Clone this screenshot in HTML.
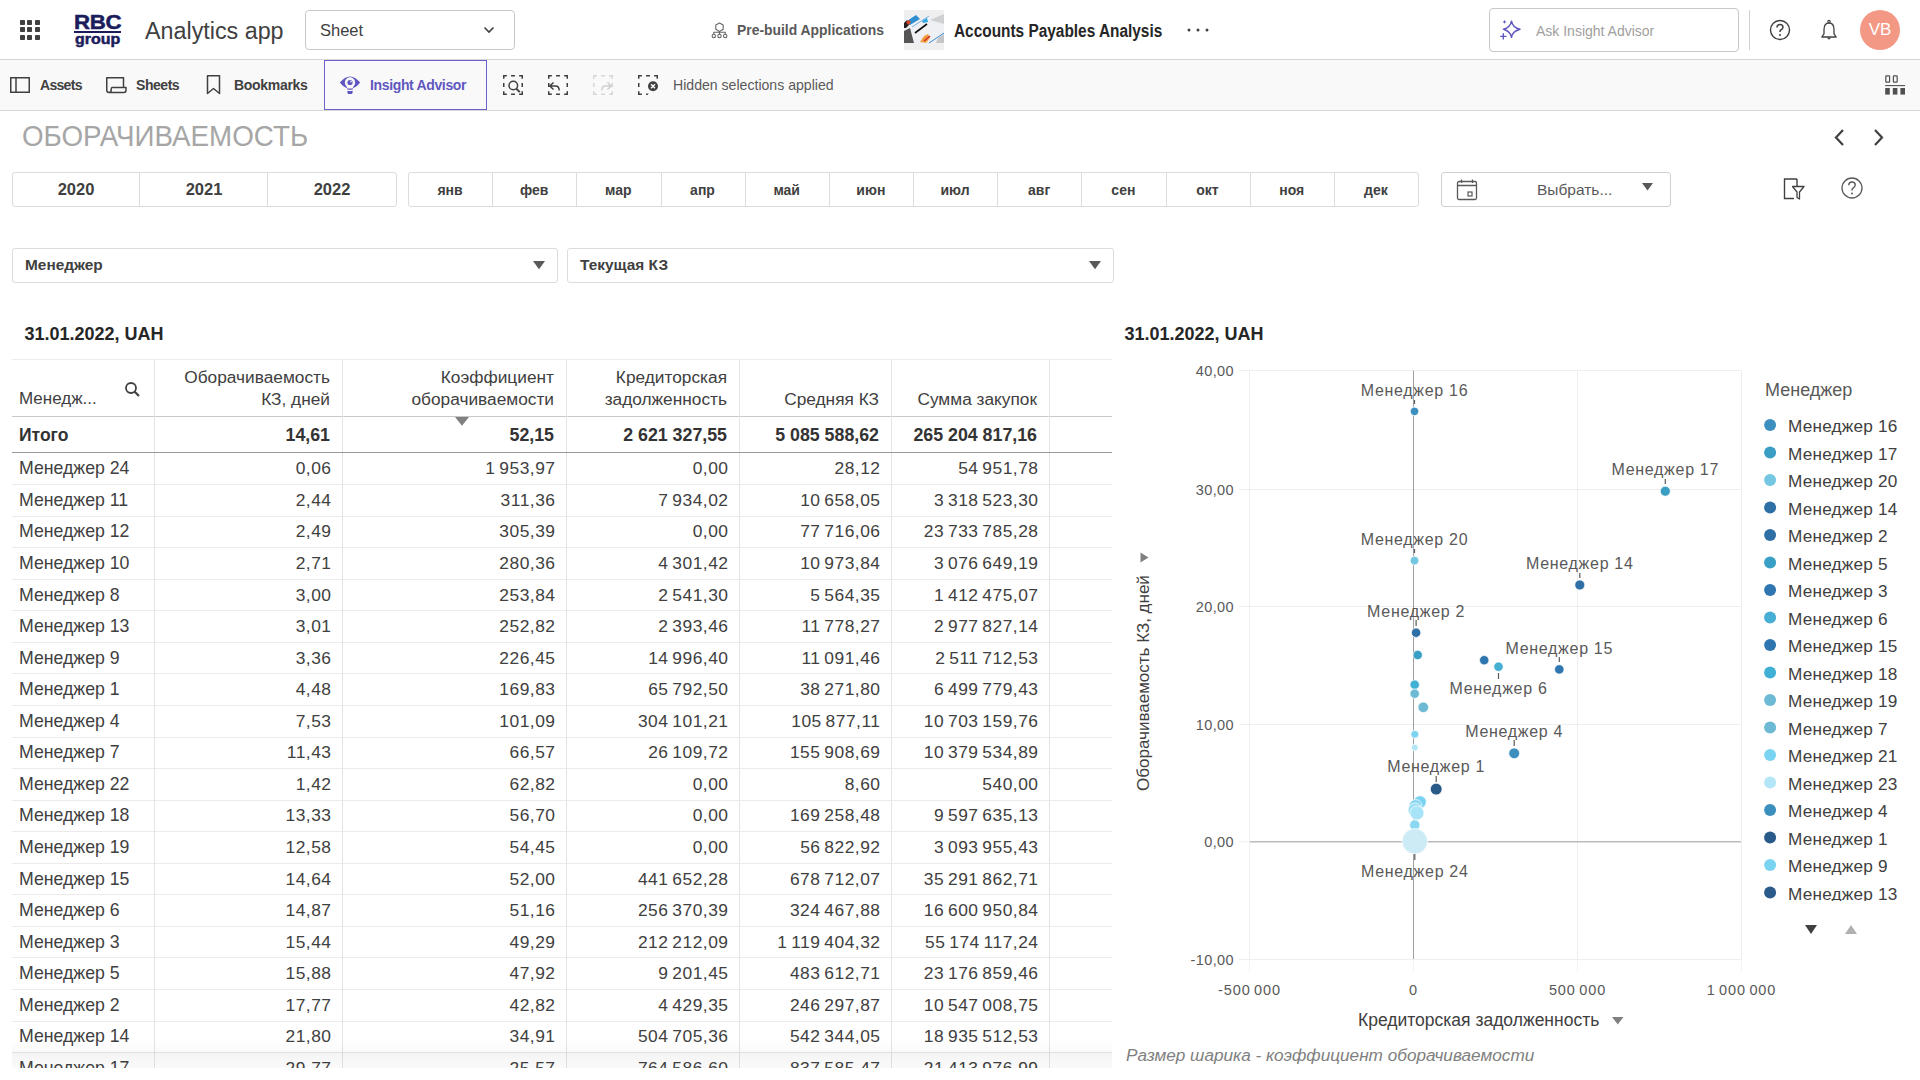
<!DOCTYPE html>
<html><head><meta charset="utf-8"><title>Accounts Payables Analysis</title>
<style>
*{box-sizing:border-box;margin:0;padding:0}
html,body{width:1920px;height:1080px;overflow:hidden;background:#fff}
body{font-family:'Liberation Sans', sans-serif;color:#404040;position:relative}
.a{position:absolute;white-space:nowrap}
svg{position:absolute;overflow:visible}
</style></head><body>

<div class="a" style="left:0;top:0;width:1920px;height:60px;background:#fff;border-bottom:1px solid #d6d6d6"></div>
<svg style="left:0;top:0" width="60" height="60"><rect x="20" y="20" width="5" height="5" rx="0.8" fill="#404040"/><rect x="20" y="27" width="5" height="5" rx="0.8" fill="#404040"/><rect x="20" y="35" width="5" height="5" rx="0.8" fill="#404040"/><rect x="27" y="20" width="5" height="5" rx="0.8" fill="#404040"/><rect x="27" y="27" width="5" height="5" rx="0.8" fill="#404040"/><rect x="27" y="35" width="5" height="5" rx="0.8" fill="#404040"/><rect x="35" y="20" width="5" height="5" rx="0.8" fill="#404040"/><rect x="35" y="27" width="5" height="5" rx="0.8" fill="#404040"/><rect x="35" y="35" width="5" height="5" rx="0.8" fill="#404040"/></svg>
<div class="a" style="left:73.8px;top:9.8px;font:bold 21px/24px 'Liberation Sans', sans-serif;color:#1c1c5c;letter-spacing:-0.3px;transform:scaleX(1.06);transform-origin:0 0;-webkit-text-stroke:0.5px #1c1c5c">RBC</div>
<div class="a" style="left:74px;top:31px;width:47px;height:2px;background:#1c1c5c"></div>
<div class="a" style="left:74.5px;top:29.2px;font:bold 14.5px/20px 'Liberation Sans', sans-serif;color:#1c1c5c;transform:scaleX(1.1);transform-origin:0 0;-webkit-text-stroke:0.5px #1c1c5c">group</div>
<div class="a" style="left:145px;top:16px;font:400 23.3px/30px 'Liberation Sans', sans-serif;color:#404040">Analytics app</div>
<div class="a" style="left:305px;top:10px;width:210px;height:40px;border:1px solid #c8c8c8;border-radius:4px"></div>
<div class="a" style="left:320px;top:19px;font:400 16.5px/22px 'Liberation Sans', sans-serif;color:#404040">Sheet</div>
<svg style="left:483px;top:26px" width="12" height="8"><path d="M1.5 1.5 L6 6 L10.5 1.5" stroke="#404040" stroke-width="1.6" fill="none"/></svg>
<svg style="left:700px;top:12px" width="40" height="36"><path d="M19.5 11 L23.2 13.1 V17.3 L19.5 19.4 L15.8 17.3 V13.1 Z" stroke="#666" stroke-width="1.1" fill="none" stroke-linejoin="round"/><path d="M19.5 19.4 V22.2 M13.8 22.4 V20.3 H25.2 V22.4" stroke="#666" stroke-width="1.1" fill="none"/><circle cx="13.8" cy="24" r="1.7" stroke="#666" stroke-width="1.1" fill="none"/><circle cx="19.5" cy="24" r="1.7" stroke="#666" stroke-width="1.1" fill="none"/><circle cx="25.2" cy="24" r="1.7" stroke="#666" stroke-width="1.1" fill="none"/></svg>
<div class="a" style="left:737px;top:20px;font:bold 13.9px/20px 'Liberation Sans', sans-serif;color:#595959">Pre-build Applications</div>
<svg style="left:904px;top:10px" width="40" height="40">
<rect x="0" y="0" width="40" height="40" fill="#efefef"/>
<rect x="0" y="6.5" width="40" height="26.5" fill="#eef0f4"/>
<path d="M0 21 L6 18 L10 33 L0 33Z" fill="#555"/>
<path d="M0 13 L3 10 L6 14 L2 18 L0 18Z" fill="#222"/>
<path d="M3 11 L12 5 L16 9 L6 15Z" fill="#2d8fd0"/>
<path d="M2 12 L5 10 L7 12 L4 15Z" fill="#e04020"/>
<path d="M11 23 L23 14" stroke="#111" stroke-width="1.6"/>
<path d="M18 11 L23 8 L24 12 L19 13Z" fill="#30a8e0"/>
<path d="M16 32 L20 26 L24 24 L26 28 L22 33Z" fill="#f0a040"/>
<path d="M20 31 L26 26" stroke="#d03030" stroke-width="1.6"/>
<path d="M8 17 L25 6" stroke="#5a9fd8" stroke-width="0.8"/>
<path d="M25 33 L40 23" stroke="#3a8ad0" stroke-width="1"/>
<path d="M26 10 L40 4 L40 14" fill="#bbb" opacity="0.6"/>
<path d="M34 28 L40 24 L40 33 L32 33Z" fill="#aaa" opacity="0.6"/>
</svg>
<div class="a" style="left:954px;top:19.8px;font:bold 17.5px/22px 'Liberation Sans', sans-serif;color:#262626;transform:scaleX(0.88);transform-origin:0 0">Accounts Payables Analysis</div>
<svg style="left:1186px;top:27px" width="24" height="6"><circle cx="3" cy="3" r="1.5" fill="#404040"/><circle cx="12" cy="3" r="1.5" fill="#404040"/><circle cx="21" cy="3" r="1.5" fill="#404040"/></svg>
<div class="a" style="left:1489px;top:8px;width:250px;height:44px;border:1px solid #c8c8c8;border-radius:4px"></div>
<svg style="left:1495px;top:14px" width="30" height="30"><path d="M16.5 7.2 Q17.5 13.5 25 15.3 Q17.5 17.2 16.5 23.3 Q15.3 17.2 8.5 15.3 Q15.3 13.5 16.5 7.2Z" stroke="#5f57c0" stroke-width="1.5" fill="none" stroke-linejoin="round"/><path d="M8.3 19.3 V25.5 M5.2 22.4 H11.5" stroke="#5f57c0" stroke-width="1.4"/><path d="M9.5 6 L10.2 7.3 L11.5 7.9 L10.2 8.5 L9.5 9.8 L8.8 8.5 L7.5 7.9 L8.8 7.3Z" fill="#5f57c0"/></svg>
<div class="a" style="left:1536px;top:21px;font:400 14px/20px 'Liberation Sans', sans-serif;color:#a0a0a0">Ask Insight Advisor</div>
<div class="a" style="left:1749px;top:10px;width:1px;height:40px;background:#d0d0d0"></div>
<svg style="left:1768px;top:18px" width="24" height="24"><circle cx="12" cy="12" r="9.5" stroke="#404040" stroke-width="1.4" fill="none"/><path d="M9 9.5 Q9 6.5 12 6.5 Q15 6.5 15 9.3 Q15 11 12.5 12.2 Q12 12.5 12 14" stroke="#404040" stroke-width="1.5" fill="none"/><circle cx="12" cy="17" r="1" fill="#404040"/></svg>
<svg style="left:1817px;top:18px" width="24" height="24"><circle cx="12" cy="3.6" r="1.2" stroke="#404040" stroke-width="1.1" fill="none"/><path d="M4.8 19 L7 15.8 V11.5 Q7 5 12 5 Q17 5 17 11.5 V15.8 L19.2 19 Z" stroke="#404040" stroke-width="1.3" fill="none" stroke-linejoin="round"/><path d="M10.6 19.5 Q12 22.3 13.4 19.5" stroke="#404040" stroke-width="1.2" fill="none"/></svg>
<div class="a" style="left:1860px;top:10px;width:40px;height:40px;border-radius:50%;background:#f49886;color:#fff;font:400 17px/40px 'Liberation Sans', sans-serif;text-align:center">VB</div>
<div class="a" style="left:0;top:60px;width:1920px;height:51px;background:#f9f9f9;border-bottom:1px solid #d6d6d6"></div>
<svg style="left:10px;top:77px" width="20" height="16"><rect x="0.75" y="0.75" width="18.5" height="14.5" stroke="#404040" stroke-width="1.5" fill="none"/><path d="M6 1 V15" stroke="#404040" stroke-width="1.5"/></svg>
<div class="a" style="left:40px;top:75px;font:bold 14px/20px 'Liberation Sans', sans-serif;color:#404040;letter-spacing:-0.7px">Assets</div>
<svg style="left:106px;top:77px" width="21" height="17"><path d="M3 15.5 Q0.75 15.5 0.75 13 V0.75 H17.5 V10 M3 15.5 H18 Q20 15.5 20 13 V10.5 H6 Q5.2 10.5 5.2 12.5 Q5.2 15.5 3 15.5" stroke="#404040" stroke-width="1.5" fill="none" stroke-linejoin="round"/></svg>
<div class="a" style="left:136px;top:75px;font:bold 14px/20px 'Liberation Sans', sans-serif;color:#404040;letter-spacing:-0.45px">Sheets</div>
<svg style="left:206px;top:75px" width="16" height="20"><path d="M1.5 0.75 H13.5 V18.5 L7.5 13.5 L1.5 18.5 Z" stroke="#404040" stroke-width="1.5" fill="none" stroke-linejoin="round"/></svg>
<div class="a" style="left:234px;top:75px;font:bold 14px/20px 'Liberation Sans', sans-serif;color:#404040;letter-spacing:-0.3px">Bookmarks</div>
<div class="a" style="left:324px;top:60px;width:163px;height:50px;border:1.5px solid #6a62c9;background:#f9f9f9"></div>
<svg style="left:330px;top:68px" width="40" height="34"><path d="M9.8 14.5 Q20 2.5 30.2 14.5 Q27 19 23 20.2 L22.5 21.8 H17.5 L17 20.2 Q13 19 9.8 14.5 Z" fill="#5f57c0"/><path d="M20 9.2 A5.3 5.3 0 0 1 23.6 18.2 L22.6 20.4 H17.4 L16.4 18.2 A5.3 5.3 0 0 1 20 9.2 Z" fill="#f9f9f9"/><circle cx="20" cy="14.5" r="2.6" fill="#5f57c0"/><circle cx="21" cy="13.6" r="0.8" fill="#f9f9f9"/><path d="M17.1 23.1 H22.9 L22.1 25.9 H17.9 Z" fill="#5f57c0"/></svg>
<div class="a" style="left:370px;top:75px;font:bold 14px/20px 'Liberation Sans', sans-serif;color:#5f57c0;letter-spacing:-0.35px">Insight Advisor</div>
<svg style="left:503px;top:75px" width="20" height="20"><path d="M0.75 0.75 H19.25 V19.25 H0.75 Z" stroke="#404040" stroke-width="1.5" fill="none" stroke-dasharray="6.2 4.2 3.9 4.2" stroke-dashoffset="3.1"/><circle cx="10.3" cy="10.5" r="4.3" stroke="#404040" stroke-width="1.5" fill="none"/><path d="M13.3 13.6 L16.8 17.1" stroke="#404040" stroke-width="2"/></svg>
<svg style="left:548px;top:75px" width="20" height="20"><path d="M0.75 0.75 H19.25 V19.25 H0.75 Z" stroke="#404040" stroke-width="1.5" fill="none" stroke-dasharray="6.2 4.2 3.9 4.2" stroke-dashoffset="3.1"/><path d="M5.5 7.5 L1.8 11 L5.5 14.5 M2.2 11 H7.5 Q11.2 11 11.2 15.5" stroke="#404040" stroke-width="1.5" fill="none"/></svg>
<svg style="left:593px;top:75px" width="20" height="20"><path d="M0.75 0.75 H19.25 V19.25 H0.75 Z" stroke="#d6d6d6" stroke-width="1.5" fill="none" stroke-dasharray="6.2 4.2 3.9 4.2" stroke-dashoffset="3.1"/><path d="M14.5 7.5 L18.2 11 L14.5 14.5 M17.8 11 H12.5 Q8.8 11 8.8 15.5" stroke="#cfcfcf" stroke-width="1.5" fill="none"/></svg>
<svg style="left:638px;top:75px" width="21" height="21"><path d="M0.75 0.75 H19.25 V19.25 H0.75 Z" stroke="#404040" stroke-width="1.5" fill="none" stroke-dasharray="6.2 4.2 3.9 4.2" stroke-dashoffset="3.1"/><path d="M15 11.2 L21 11.2 L21 21 L9 21Z" fill="#f9f9f9"/><circle cx="15" cy="11.2" r="6.6" fill="#f9f9f9"/><circle cx="15" cy="11.2" r="5" fill="#404040"/><path d="M13 9.2 L17 13.2 M17 9.2 L13 13.2" stroke="#fff" stroke-width="1.4"/></svg>
<div class="a" style="left:673px;top:75px;font:400 14.1px/20px 'Liberation Sans', sans-serif;color:#595959">Hidden selections applied</div>
<svg style="left:1884px;top:75px" width="22" height="22"><rect x="1.8" y="0.8" width="3.8" height="6.4" rx="0.6" stroke="#505050" stroke-width="1.2" fill="none"/><rect x="9.4" y="0.8" width="3.8" height="6.4" rx="0.6" stroke="#505050" stroke-width="1.2" fill="none"/><path d="M1.2 10.6 H21" stroke="#505050" stroke-width="1.1"/><rect x="1.2" y="13" width="4.6" height="6.6" fill="#505050"/><rect x="8.8" y="13" width="4.6" height="6.6" fill="#505050"/><rect x="16.4" y="13" width="4.6" height="6.6" fill="#505050"/></svg>
<div class="a" style="left:21.5px;top:117.6px;font:400 30px/36px 'Liberation Sans', sans-serif;color:#a6a6a6;transform:scaleX(0.925);transform-origin:0 0">ОБОРАЧИВАЕМОСТЬ</div>
<svg style="left:1830px;top:128px" width="60" height="20"><path d="M13 2 L6 9.5 L13 17" stroke="#404040" stroke-width="2.2" fill="none"/><path d="M45 2 L52 9.5 L45 17" stroke="#404040" stroke-width="2.2" fill="none"/></svg>
<div class="a" style="left:12px;top:172px;width:385px;height:35px;border:1px solid #dcdcdc;border-radius:3px"></div>
<div class="a" style="left:12px;top:179px;width:128px;text-align:center;font:bold 16.5px/20px 'Liberation Sans', sans-serif;color:#404040">2020</div>
<div class="a" style="left:139px;top:173px;width:1px;height:33px;background:#dcdcdc"></div>
<div class="a" style="left:140px;top:179px;width:128px;text-align:center;font:bold 16.5px/20px 'Liberation Sans', sans-serif;color:#404040">2021</div>
<div class="a" style="left:267px;top:173px;width:1px;height:33px;background:#dcdcdc"></div>
<div class="a" style="left:268px;top:179px;width:128px;text-align:center;font:bold 16.5px/20px 'Liberation Sans', sans-serif;color:#404040">2022</div>
<div class="a" style="left:408px;top:172px;width:1011px;height:35px;border:1px solid #dcdcdc;border-radius:3px"></div>
<div class="a" style="left:408.00px;top:180px;width:84px;text-align:center;font:bold 14px/20px 'Liberation Sans', sans-serif;color:#404040">янв</div>
<div class="a" style="left:492.17px;top:173px;width:1px;height:33px;background:#dcdcdc"></div>
<div class="a" style="left:492.17px;top:180px;width:84px;text-align:center;font:bold 14px/20px 'Liberation Sans', sans-serif;color:#404040">фев</div>
<div class="a" style="left:576.34px;top:173px;width:1px;height:33px;background:#dcdcdc"></div>
<div class="a" style="left:576.34px;top:180px;width:84px;text-align:center;font:bold 14px/20px 'Liberation Sans', sans-serif;color:#404040">мар</div>
<div class="a" style="left:660.51px;top:173px;width:1px;height:33px;background:#dcdcdc"></div>
<div class="a" style="left:660.51px;top:180px;width:84px;text-align:center;font:bold 14px/20px 'Liberation Sans', sans-serif;color:#404040">апр</div>
<div class="a" style="left:744.68px;top:173px;width:1px;height:33px;background:#dcdcdc"></div>
<div class="a" style="left:744.68px;top:180px;width:84px;text-align:center;font:bold 14px/20px 'Liberation Sans', sans-serif;color:#404040">май</div>
<div class="a" style="left:828.85px;top:173px;width:1px;height:33px;background:#dcdcdc"></div>
<div class="a" style="left:828.85px;top:180px;width:84px;text-align:center;font:bold 14px/20px 'Liberation Sans', sans-serif;color:#404040">июн</div>
<div class="a" style="left:913.02px;top:173px;width:1px;height:33px;background:#dcdcdc"></div>
<div class="a" style="left:913.02px;top:180px;width:84px;text-align:center;font:bold 14px/20px 'Liberation Sans', sans-serif;color:#404040">июл</div>
<div class="a" style="left:997.19px;top:173px;width:1px;height:33px;background:#dcdcdc"></div>
<div class="a" style="left:997.19px;top:180px;width:84px;text-align:center;font:bold 14px/20px 'Liberation Sans', sans-serif;color:#404040">авг</div>
<div class="a" style="left:1081.36px;top:173px;width:1px;height:33px;background:#dcdcdc"></div>
<div class="a" style="left:1081.36px;top:180px;width:84px;text-align:center;font:bold 14px/20px 'Liberation Sans', sans-serif;color:#404040">сен</div>
<div class="a" style="left:1165.53px;top:173px;width:1px;height:33px;background:#dcdcdc"></div>
<div class="a" style="left:1165.53px;top:180px;width:84px;text-align:center;font:bold 14px/20px 'Liberation Sans', sans-serif;color:#404040">окт</div>
<div class="a" style="left:1249.70px;top:173px;width:1px;height:33px;background:#dcdcdc"></div>
<div class="a" style="left:1249.70px;top:180px;width:84px;text-align:center;font:bold 14px/20px 'Liberation Sans', sans-serif;color:#404040">ноя</div>
<div class="a" style="left:1333.87px;top:173px;width:1px;height:33px;background:#dcdcdc"></div>
<div class="a" style="left:1333.87px;top:180px;width:84px;text-align:center;font:bold 14px/20px 'Liberation Sans', sans-serif;color:#404040">дек</div>
<div class="a" style="left:1441px;top:172px;width:230px;height:35px;border:1px solid #d0d0d0;border-radius:3px"></div>
<svg style="left:1456px;top:179px" width="22" height="22"><rect x="1.5" y="2.5" width="19" height="18" rx="1.5" stroke="#595959" stroke-width="1.3" fill="none"/><path d="M1.5 6.5 H20.5 M5.5 0.5 V4 M16.5 0.5 V4" stroke="#595959" stroke-width="1.3"/><rect x="12" y="13" width="4" height="4" stroke="#595959" stroke-width="1.2" fill="none"/></svg>
<div class="a" style="left:1537px;top:179px;font:400 15.5px/22px 'Liberation Sans', sans-serif;color:#595959">Выбрать...</div>
<svg style="left:1642px;top:183px" width="12" height="8"><path d="M0 0 H11 L5.5 7.5Z" fill="#595959"/></svg>
<svg style="left:1783px;top:178px" width="22" height="24"><path d="M14 1 H1.5 V20.5 H11" stroke="#404040" stroke-width="1.4" fill="none"/><path d="M9.5 8.5 H21 L16.5 14 V21 L14 19.5 V14 Z" stroke="#404040" stroke-width="1.3" fill="none" stroke-linejoin="round"/><path d="M14 1 V8" stroke="#404040" stroke-width="1.4"/></svg>
<svg style="left:1840px;top:176px" width="24" height="24"><circle cx="12" cy="12" r="10" stroke="#595959" stroke-width="1.3" fill="none"/><path d="M8.8 9.3 Q8.8 6 12 6 Q15.2 6 15.2 9 Q15.2 11 12.8 12.3 Q12 12.8 12 14.5" stroke="#595959" stroke-width="1.4" fill="none"/><circle cx="12" cy="17.5" r="1" fill="#595959"/></svg>
<div class="a" style="left:12px;top:248px;width:546px;height:35px;border:1px solid #dcdcdc;border-radius:3px"></div>
<div class="a" style="left:25px;top:255px;font:bold 15.4px/20px 'Liberation Sans', sans-serif;color:#404040">Менеджер</div>
<svg style="left:532.5px;top:261px" width="13" height="9"><path d="M0 0 H12 L6 8.2Z" fill="#595959"/></svg>
<div class="a" style="left:567px;top:248px;width:547px;height:35px;border:1px solid #dcdcdc;border-radius:3px"></div>
<div class="a" style="left:580px;top:255px;font:bold 15.4px/20px 'Liberation Sans', sans-serif;color:#404040">Текущая КЗ</div>
<svg style="left:1088.5px;top:261px" width="13" height="9"><path d="M0 0 H12 L6 8.2Z" fill="#595959"/></svg>
<div class="a" style="left:24.5px;top:323px;font:bold 18px/22px 'Liberation Sans', sans-serif;color:#262626">31.01.2022, UAH</div>
<div class="a" style="left:1124.5px;top:323px;font:bold 18px/22px 'Liberation Sans', sans-serif;color:#262626">31.01.2022, UAH</div>
<div class="a" style="left:12px;top:359px;width:1100px;height:1px;background:#ececec"></div>
<div class="a" style="left:12px;top:416px;width:1100px;height:1px;background:#c8c8c8"></div>
<div class="a" style="left:12px;top:484.15px;width:1100px;height:1px;background:#ebebeb"></div>
<div class="a" style="left:12px;top:515.70px;width:1100px;height:1px;background:#ebebeb"></div>
<div class="a" style="left:12px;top:547.25px;width:1100px;height:1px;background:#ebebeb"></div>
<div class="a" style="left:12px;top:578.80px;width:1100px;height:1px;background:#ebebeb"></div>
<div class="a" style="left:12px;top:610.35px;width:1100px;height:1px;background:#ebebeb"></div>
<div class="a" style="left:12px;top:641.90px;width:1100px;height:1px;background:#ebebeb"></div>
<div class="a" style="left:12px;top:673.45px;width:1100px;height:1px;background:#ebebeb"></div>
<div class="a" style="left:12px;top:705.00px;width:1100px;height:1px;background:#ebebeb"></div>
<div class="a" style="left:12px;top:736.55px;width:1100px;height:1px;background:#ebebeb"></div>
<div class="a" style="left:12px;top:768.10px;width:1100px;height:1px;background:#ebebeb"></div>
<div class="a" style="left:12px;top:799.65px;width:1100px;height:1px;background:#ebebeb"></div>
<div class="a" style="left:12px;top:831.20px;width:1100px;height:1px;background:#ebebeb"></div>
<div class="a" style="left:12px;top:862.75px;width:1100px;height:1px;background:#ebebeb"></div>
<div class="a" style="left:12px;top:894.30px;width:1100px;height:1px;background:#ebebeb"></div>
<div class="a" style="left:12px;top:925.85px;width:1100px;height:1px;background:#ebebeb"></div>
<div class="a" style="left:12px;top:957.40px;width:1100px;height:1px;background:#ebebeb"></div>
<div class="a" style="left:12px;top:988.95px;width:1100px;height:1px;background:#ebebeb"></div>
<div class="a" style="left:12px;top:1020.50px;width:1100px;height:1px;background:#ebebeb"></div>
<div class="a" style="left:12px;top:1052.05px;width:1100px;height:1px;background:#ebebeb"></div>
<div class="a" style="left:154px;top:360px;width:1px;height:708px;background:#e4e4e4"></div>
<div class="a" style="left:342px;top:360px;width:1px;height:708px;background:#e4e4e4"></div>
<div class="a" style="left:566px;top:360px;width:1px;height:708px;background:#e4e4e4"></div>
<div class="a" style="left:739px;top:360px;width:1px;height:708px;background:#e4e4e4"></div>
<div class="a" style="left:891px;top:360px;width:1px;height:708px;background:#e4e4e4"></div>
<div class="a" style="left:1049px;top:360px;width:1px;height:708px;background:#e4e4e4"></div>
<div class="a" style="left:12px;top:451.6px;width:1100px;height:1.4px;background:#999"></div>
<div class="a" style="left:19px;top:389px;font:400 17px/20px 'Liberation Sans', sans-serif;color:#404040">Менедж...</div>
<svg style="left:124px;top:381px" width="18" height="18"><circle cx="7" cy="7" r="5" stroke="#404040" stroke-width="1.8" fill="none"/><path d="M10.5 10.5 L15 15" stroke="#404040" stroke-width="2.2"/></svg>
<div class="a" style="right:1590px;top:366px;text-align:right;font:400 17.3px/22px 'Liberation Sans', sans-serif;color:#404040">Оборачиваемость<br>КЗ, дней</div>
<div class="a" style="right:1366px;top:366px;text-align:right;font:400 17.3px/22px 'Liberation Sans', sans-serif;color:#404040">Коэффициент<br>оборачиваемости</div>
<div class="a" style="right:1193px;top:366px;text-align:right;font:400 17.3px/22px 'Liberation Sans', sans-serif;color:#404040">Кредиторская<br>задолженность</div>
<div class="a" style="right:1041px;top:366px;text-align:right;font:400 17.3px/22px 'Liberation Sans', sans-serif;color:#404040">&nbsp;<br>Средняя КЗ</div>
<div class="a" style="right:883px;top:366px;text-align:right;font:400 17.3px/22px 'Liberation Sans', sans-serif;color:#404040">&nbsp;<br>Сумма закупок</div>
<svg style="left:455px;top:417px" width="15" height="10"><path d="M0 0 H14 L7 8.7Z" fill="#808080"/></svg>
<div class="a" style="left:19px;top:424px;font:bold 17.5px/22px 'Liberation Sans', sans-serif;color:#333">Итого</div>
<div class="a" style="right:1590px;top:424px;font:bold 17.8px/22px 'Liberation Sans', sans-serif;color:#333">14,61</div>
<div class="a" style="right:1366px;top:424px;font:bold 17.8px/22px 'Liberation Sans', sans-serif;color:#333">52,15</div>
<div class="a" style="right:1193px;top:424px;font:bold 17.8px/22px 'Liberation Sans', sans-serif;color:#333">2&nbsp;621&nbsp;327,55</div>
<div class="a" style="right:1041px;top:424px;font:bold 17.8px/22px 'Liberation Sans', sans-serif;color:#333">5&nbsp;085&nbsp;588,62</div>
<div class="a" style="right:883px;top:424px;font:bold 17.8px/22px 'Liberation Sans', sans-serif;color:#333">265&nbsp;204&nbsp;817,16</div>
<div class="a" style="left:19px;top:457.38px;font:400 17.7px/22px 'Liberation Sans', sans-serif;color:#404040">Менеджер 24</div>
<div class="a" style="right:1588.5px;top:457.38px;font:400 17.4px/22px 'Liberation Sans', sans-serif;color:#404040;letter-spacing:0.5px;word-spacing:-1.5px">0,06</div>
<div class="a" style="right:1364.5px;top:457.38px;font:400 17.4px/22px 'Liberation Sans', sans-serif;color:#404040;letter-spacing:0.5px;word-spacing:-1.5px">1&nbsp;953,97</div>
<div class="a" style="right:1191.5px;top:457.38px;font:400 17.4px/22px 'Liberation Sans', sans-serif;color:#404040;letter-spacing:0.5px;word-spacing:-1.5px">0,00</div>
<div class="a" style="right:1039.5px;top:457.38px;font:400 17.4px/22px 'Liberation Sans', sans-serif;color:#404040;letter-spacing:0.5px;word-spacing:-1.5px">28,12</div>
<div class="a" style="right:881.5px;top:457.38px;font:400 17.4px/22px 'Liberation Sans', sans-serif;color:#404040;letter-spacing:0.5px;word-spacing:-1.5px">54&nbsp;951,78</div>
<div class="a" style="left:19px;top:488.93px;font:400 17.7px/22px 'Liberation Sans', sans-serif;color:#404040">Менеджер 11</div>
<div class="a" style="right:1588.5px;top:488.93px;font:400 17.4px/22px 'Liberation Sans', sans-serif;color:#404040;letter-spacing:0.5px;word-spacing:-1.5px">2,44</div>
<div class="a" style="right:1364.5px;top:488.93px;font:400 17.4px/22px 'Liberation Sans', sans-serif;color:#404040;letter-spacing:0.5px;word-spacing:-1.5px">311,36</div>
<div class="a" style="right:1191.5px;top:488.93px;font:400 17.4px/22px 'Liberation Sans', sans-serif;color:#404040;letter-spacing:0.5px;word-spacing:-1.5px">7&nbsp;934,02</div>
<div class="a" style="right:1039.5px;top:488.93px;font:400 17.4px/22px 'Liberation Sans', sans-serif;color:#404040;letter-spacing:0.5px;word-spacing:-1.5px">10&nbsp;658,05</div>
<div class="a" style="right:881.5px;top:488.93px;font:400 17.4px/22px 'Liberation Sans', sans-serif;color:#404040;letter-spacing:0.5px;word-spacing:-1.5px">3&nbsp;318&nbsp;523,30</div>
<div class="a" style="left:19px;top:520.48px;font:400 17.7px/22px 'Liberation Sans', sans-serif;color:#404040">Менеджер 12</div>
<div class="a" style="right:1588.5px;top:520.48px;font:400 17.4px/22px 'Liberation Sans', sans-serif;color:#404040;letter-spacing:0.5px;word-spacing:-1.5px">2,49</div>
<div class="a" style="right:1364.5px;top:520.48px;font:400 17.4px/22px 'Liberation Sans', sans-serif;color:#404040;letter-spacing:0.5px;word-spacing:-1.5px">305,39</div>
<div class="a" style="right:1191.5px;top:520.48px;font:400 17.4px/22px 'Liberation Sans', sans-serif;color:#404040;letter-spacing:0.5px;word-spacing:-1.5px">0,00</div>
<div class="a" style="right:1039.5px;top:520.48px;font:400 17.4px/22px 'Liberation Sans', sans-serif;color:#404040;letter-spacing:0.5px;word-spacing:-1.5px">77&nbsp;716,06</div>
<div class="a" style="right:881.5px;top:520.48px;font:400 17.4px/22px 'Liberation Sans', sans-serif;color:#404040;letter-spacing:0.5px;word-spacing:-1.5px">23&nbsp;733&nbsp;785,28</div>
<div class="a" style="left:19px;top:552.02px;font:400 17.7px/22px 'Liberation Sans', sans-serif;color:#404040">Менеджер 10</div>
<div class="a" style="right:1588.5px;top:552.02px;font:400 17.4px/22px 'Liberation Sans', sans-serif;color:#404040;letter-spacing:0.5px;word-spacing:-1.5px">2,71</div>
<div class="a" style="right:1364.5px;top:552.02px;font:400 17.4px/22px 'Liberation Sans', sans-serif;color:#404040;letter-spacing:0.5px;word-spacing:-1.5px">280,36</div>
<div class="a" style="right:1191.5px;top:552.02px;font:400 17.4px/22px 'Liberation Sans', sans-serif;color:#404040;letter-spacing:0.5px;word-spacing:-1.5px">4&nbsp;301,42</div>
<div class="a" style="right:1039.5px;top:552.02px;font:400 17.4px/22px 'Liberation Sans', sans-serif;color:#404040;letter-spacing:0.5px;word-spacing:-1.5px">10&nbsp;973,84</div>
<div class="a" style="right:881.5px;top:552.02px;font:400 17.4px/22px 'Liberation Sans', sans-serif;color:#404040;letter-spacing:0.5px;word-spacing:-1.5px">3&nbsp;076&nbsp;649,19</div>
<div class="a" style="left:19px;top:583.58px;font:400 17.7px/22px 'Liberation Sans', sans-serif;color:#404040">Менеджер 8</div>
<div class="a" style="right:1588.5px;top:583.58px;font:400 17.4px/22px 'Liberation Sans', sans-serif;color:#404040;letter-spacing:0.5px;word-spacing:-1.5px">3,00</div>
<div class="a" style="right:1364.5px;top:583.58px;font:400 17.4px/22px 'Liberation Sans', sans-serif;color:#404040;letter-spacing:0.5px;word-spacing:-1.5px">253,84</div>
<div class="a" style="right:1191.5px;top:583.58px;font:400 17.4px/22px 'Liberation Sans', sans-serif;color:#404040;letter-spacing:0.5px;word-spacing:-1.5px">2&nbsp;541,30</div>
<div class="a" style="right:1039.5px;top:583.58px;font:400 17.4px/22px 'Liberation Sans', sans-serif;color:#404040;letter-spacing:0.5px;word-spacing:-1.5px">5&nbsp;564,35</div>
<div class="a" style="right:881.5px;top:583.58px;font:400 17.4px/22px 'Liberation Sans', sans-serif;color:#404040;letter-spacing:0.5px;word-spacing:-1.5px">1&nbsp;412&nbsp;475,07</div>
<div class="a" style="left:19px;top:615.12px;font:400 17.7px/22px 'Liberation Sans', sans-serif;color:#404040">Менеджер 13</div>
<div class="a" style="right:1588.5px;top:615.12px;font:400 17.4px/22px 'Liberation Sans', sans-serif;color:#404040;letter-spacing:0.5px;word-spacing:-1.5px">3,01</div>
<div class="a" style="right:1364.5px;top:615.12px;font:400 17.4px/22px 'Liberation Sans', sans-serif;color:#404040;letter-spacing:0.5px;word-spacing:-1.5px">252,82</div>
<div class="a" style="right:1191.5px;top:615.12px;font:400 17.4px/22px 'Liberation Sans', sans-serif;color:#404040;letter-spacing:0.5px;word-spacing:-1.5px">2&nbsp;393,46</div>
<div class="a" style="right:1039.5px;top:615.12px;font:400 17.4px/22px 'Liberation Sans', sans-serif;color:#404040;letter-spacing:0.5px;word-spacing:-1.5px">11&nbsp;778,27</div>
<div class="a" style="right:881.5px;top:615.12px;font:400 17.4px/22px 'Liberation Sans', sans-serif;color:#404040;letter-spacing:0.5px;word-spacing:-1.5px">2&nbsp;977&nbsp;827,14</div>
<div class="a" style="left:19px;top:646.68px;font:400 17.7px/22px 'Liberation Sans', sans-serif;color:#404040">Менеджер 9</div>
<div class="a" style="right:1588.5px;top:646.68px;font:400 17.4px/22px 'Liberation Sans', sans-serif;color:#404040;letter-spacing:0.5px;word-spacing:-1.5px">3,36</div>
<div class="a" style="right:1364.5px;top:646.68px;font:400 17.4px/22px 'Liberation Sans', sans-serif;color:#404040;letter-spacing:0.5px;word-spacing:-1.5px">226,45</div>
<div class="a" style="right:1191.5px;top:646.68px;font:400 17.4px/22px 'Liberation Sans', sans-serif;color:#404040;letter-spacing:0.5px;word-spacing:-1.5px">14&nbsp;996,40</div>
<div class="a" style="right:1039.5px;top:646.68px;font:400 17.4px/22px 'Liberation Sans', sans-serif;color:#404040;letter-spacing:0.5px;word-spacing:-1.5px">11&nbsp;091,46</div>
<div class="a" style="right:881.5px;top:646.68px;font:400 17.4px/22px 'Liberation Sans', sans-serif;color:#404040;letter-spacing:0.5px;word-spacing:-1.5px">2&nbsp;511&nbsp;712,53</div>
<div class="a" style="left:19px;top:678.23px;font:400 17.7px/22px 'Liberation Sans', sans-serif;color:#404040">Менеджер 1</div>
<div class="a" style="right:1588.5px;top:678.23px;font:400 17.4px/22px 'Liberation Sans', sans-serif;color:#404040;letter-spacing:0.5px;word-spacing:-1.5px">4,48</div>
<div class="a" style="right:1364.5px;top:678.23px;font:400 17.4px/22px 'Liberation Sans', sans-serif;color:#404040;letter-spacing:0.5px;word-spacing:-1.5px">169,83</div>
<div class="a" style="right:1191.5px;top:678.23px;font:400 17.4px/22px 'Liberation Sans', sans-serif;color:#404040;letter-spacing:0.5px;word-spacing:-1.5px">65&nbsp;792,50</div>
<div class="a" style="right:1039.5px;top:678.23px;font:400 17.4px/22px 'Liberation Sans', sans-serif;color:#404040;letter-spacing:0.5px;word-spacing:-1.5px">38&nbsp;271,80</div>
<div class="a" style="right:881.5px;top:678.23px;font:400 17.4px/22px 'Liberation Sans', sans-serif;color:#404040;letter-spacing:0.5px;word-spacing:-1.5px">6&nbsp;499&nbsp;779,43</div>
<div class="a" style="left:19px;top:709.77px;font:400 17.7px/22px 'Liberation Sans', sans-serif;color:#404040">Менеджер 4</div>
<div class="a" style="right:1588.5px;top:709.77px;font:400 17.4px/22px 'Liberation Sans', sans-serif;color:#404040;letter-spacing:0.5px;word-spacing:-1.5px">7,53</div>
<div class="a" style="right:1364.5px;top:709.77px;font:400 17.4px/22px 'Liberation Sans', sans-serif;color:#404040;letter-spacing:0.5px;word-spacing:-1.5px">101,09</div>
<div class="a" style="right:1191.5px;top:709.77px;font:400 17.4px/22px 'Liberation Sans', sans-serif;color:#404040;letter-spacing:0.5px;word-spacing:-1.5px">304&nbsp;101,21</div>
<div class="a" style="right:1039.5px;top:709.77px;font:400 17.4px/22px 'Liberation Sans', sans-serif;color:#404040;letter-spacing:0.5px;word-spacing:-1.5px">105&nbsp;877,11</div>
<div class="a" style="right:881.5px;top:709.77px;font:400 17.4px/22px 'Liberation Sans', sans-serif;color:#404040;letter-spacing:0.5px;word-spacing:-1.5px">10&nbsp;703&nbsp;159,76</div>
<div class="a" style="left:19px;top:741.32px;font:400 17.7px/22px 'Liberation Sans', sans-serif;color:#404040">Менеджер 7</div>
<div class="a" style="right:1588.5px;top:741.32px;font:400 17.4px/22px 'Liberation Sans', sans-serif;color:#404040;letter-spacing:0.5px;word-spacing:-1.5px">11,43</div>
<div class="a" style="right:1364.5px;top:741.32px;font:400 17.4px/22px 'Liberation Sans', sans-serif;color:#404040;letter-spacing:0.5px;word-spacing:-1.5px">66,57</div>
<div class="a" style="right:1191.5px;top:741.32px;font:400 17.4px/22px 'Liberation Sans', sans-serif;color:#404040;letter-spacing:0.5px;word-spacing:-1.5px">26&nbsp;109,72</div>
<div class="a" style="right:1039.5px;top:741.32px;font:400 17.4px/22px 'Liberation Sans', sans-serif;color:#404040;letter-spacing:0.5px;word-spacing:-1.5px">155&nbsp;908,69</div>
<div class="a" style="right:881.5px;top:741.32px;font:400 17.4px/22px 'Liberation Sans', sans-serif;color:#404040;letter-spacing:0.5px;word-spacing:-1.5px">10&nbsp;379&nbsp;534,89</div>
<div class="a" style="left:19px;top:772.88px;font:400 17.7px/22px 'Liberation Sans', sans-serif;color:#404040">Менеджер 22</div>
<div class="a" style="right:1588.5px;top:772.88px;font:400 17.4px/22px 'Liberation Sans', sans-serif;color:#404040;letter-spacing:0.5px;word-spacing:-1.5px">1,42</div>
<div class="a" style="right:1364.5px;top:772.88px;font:400 17.4px/22px 'Liberation Sans', sans-serif;color:#404040;letter-spacing:0.5px;word-spacing:-1.5px">62,82</div>
<div class="a" style="right:1191.5px;top:772.88px;font:400 17.4px/22px 'Liberation Sans', sans-serif;color:#404040;letter-spacing:0.5px;word-spacing:-1.5px">0,00</div>
<div class="a" style="right:1039.5px;top:772.88px;font:400 17.4px/22px 'Liberation Sans', sans-serif;color:#404040;letter-spacing:0.5px;word-spacing:-1.5px">8,60</div>
<div class="a" style="right:881.5px;top:772.88px;font:400 17.4px/22px 'Liberation Sans', sans-serif;color:#404040;letter-spacing:0.5px;word-spacing:-1.5px">540,00</div>
<div class="a" style="left:19px;top:804.43px;font:400 17.7px/22px 'Liberation Sans', sans-serif;color:#404040">Менеджер 18</div>
<div class="a" style="right:1588.5px;top:804.43px;font:400 17.4px/22px 'Liberation Sans', sans-serif;color:#404040;letter-spacing:0.5px;word-spacing:-1.5px">13,33</div>
<div class="a" style="right:1364.5px;top:804.43px;font:400 17.4px/22px 'Liberation Sans', sans-serif;color:#404040;letter-spacing:0.5px;word-spacing:-1.5px">56,70</div>
<div class="a" style="right:1191.5px;top:804.43px;font:400 17.4px/22px 'Liberation Sans', sans-serif;color:#404040;letter-spacing:0.5px;word-spacing:-1.5px">0,00</div>
<div class="a" style="right:1039.5px;top:804.43px;font:400 17.4px/22px 'Liberation Sans', sans-serif;color:#404040;letter-spacing:0.5px;word-spacing:-1.5px">169&nbsp;258,48</div>
<div class="a" style="right:881.5px;top:804.43px;font:400 17.4px/22px 'Liberation Sans', sans-serif;color:#404040;letter-spacing:0.5px;word-spacing:-1.5px">9&nbsp;597&nbsp;635,13</div>
<div class="a" style="left:19px;top:835.98px;font:400 17.7px/22px 'Liberation Sans', sans-serif;color:#404040">Менеджер 19</div>
<div class="a" style="right:1588.5px;top:835.98px;font:400 17.4px/22px 'Liberation Sans', sans-serif;color:#404040;letter-spacing:0.5px;word-spacing:-1.5px">12,58</div>
<div class="a" style="right:1364.5px;top:835.98px;font:400 17.4px/22px 'Liberation Sans', sans-serif;color:#404040;letter-spacing:0.5px;word-spacing:-1.5px">54,45</div>
<div class="a" style="right:1191.5px;top:835.98px;font:400 17.4px/22px 'Liberation Sans', sans-serif;color:#404040;letter-spacing:0.5px;word-spacing:-1.5px">0,00</div>
<div class="a" style="right:1039.5px;top:835.98px;font:400 17.4px/22px 'Liberation Sans', sans-serif;color:#404040;letter-spacing:0.5px;word-spacing:-1.5px">56&nbsp;822,92</div>
<div class="a" style="right:881.5px;top:835.98px;font:400 17.4px/22px 'Liberation Sans', sans-serif;color:#404040;letter-spacing:0.5px;word-spacing:-1.5px">3&nbsp;093&nbsp;955,43</div>
<div class="a" style="left:19px;top:867.52px;font:400 17.7px/22px 'Liberation Sans', sans-serif;color:#404040">Менеджер 15</div>
<div class="a" style="right:1588.5px;top:867.52px;font:400 17.4px/22px 'Liberation Sans', sans-serif;color:#404040;letter-spacing:0.5px;word-spacing:-1.5px">14,64</div>
<div class="a" style="right:1364.5px;top:867.52px;font:400 17.4px/22px 'Liberation Sans', sans-serif;color:#404040;letter-spacing:0.5px;word-spacing:-1.5px">52,00</div>
<div class="a" style="right:1191.5px;top:867.52px;font:400 17.4px/22px 'Liberation Sans', sans-serif;color:#404040;letter-spacing:0.5px;word-spacing:-1.5px">441&nbsp;652,28</div>
<div class="a" style="right:1039.5px;top:867.52px;font:400 17.4px/22px 'Liberation Sans', sans-serif;color:#404040;letter-spacing:0.5px;word-spacing:-1.5px">678&nbsp;712,07</div>
<div class="a" style="right:881.5px;top:867.52px;font:400 17.4px/22px 'Liberation Sans', sans-serif;color:#404040;letter-spacing:0.5px;word-spacing:-1.5px">35&nbsp;291&nbsp;862,71</div>
<div class="a" style="left:19px;top:899.07px;font:400 17.7px/22px 'Liberation Sans', sans-serif;color:#404040">Менеджер 6</div>
<div class="a" style="right:1588.5px;top:899.07px;font:400 17.4px/22px 'Liberation Sans', sans-serif;color:#404040;letter-spacing:0.5px;word-spacing:-1.5px">14,87</div>
<div class="a" style="right:1364.5px;top:899.07px;font:400 17.4px/22px 'Liberation Sans', sans-serif;color:#404040;letter-spacing:0.5px;word-spacing:-1.5px">51,16</div>
<div class="a" style="right:1191.5px;top:899.07px;font:400 17.4px/22px 'Liberation Sans', sans-serif;color:#404040;letter-spacing:0.5px;word-spacing:-1.5px">256&nbsp;370,39</div>
<div class="a" style="right:1039.5px;top:899.07px;font:400 17.4px/22px 'Liberation Sans', sans-serif;color:#404040;letter-spacing:0.5px;word-spacing:-1.5px">324&nbsp;467,88</div>
<div class="a" style="right:881.5px;top:899.07px;font:400 17.4px/22px 'Liberation Sans', sans-serif;color:#404040;letter-spacing:0.5px;word-spacing:-1.5px">16&nbsp;600&nbsp;950,84</div>
<div class="a" style="left:19px;top:930.62px;font:400 17.7px/22px 'Liberation Sans', sans-serif;color:#404040">Менеджер 3</div>
<div class="a" style="right:1588.5px;top:930.62px;font:400 17.4px/22px 'Liberation Sans', sans-serif;color:#404040;letter-spacing:0.5px;word-spacing:-1.5px">15,44</div>
<div class="a" style="right:1364.5px;top:930.62px;font:400 17.4px/22px 'Liberation Sans', sans-serif;color:#404040;letter-spacing:0.5px;word-spacing:-1.5px">49,29</div>
<div class="a" style="right:1191.5px;top:930.62px;font:400 17.4px/22px 'Liberation Sans', sans-serif;color:#404040;letter-spacing:0.5px;word-spacing:-1.5px">212&nbsp;212,09</div>
<div class="a" style="right:1039.5px;top:930.62px;font:400 17.4px/22px 'Liberation Sans', sans-serif;color:#404040;letter-spacing:0.5px;word-spacing:-1.5px">1&nbsp;119&nbsp;404,32</div>
<div class="a" style="right:881.5px;top:930.62px;font:400 17.4px/22px 'Liberation Sans', sans-serif;color:#404040;letter-spacing:0.5px;word-spacing:-1.5px">55&nbsp;174&nbsp;117,24</div>
<div class="a" style="left:19px;top:962.18px;font:400 17.7px/22px 'Liberation Sans', sans-serif;color:#404040">Менеджер 5</div>
<div class="a" style="right:1588.5px;top:962.18px;font:400 17.4px/22px 'Liberation Sans', sans-serif;color:#404040;letter-spacing:0.5px;word-spacing:-1.5px">15,88</div>
<div class="a" style="right:1364.5px;top:962.18px;font:400 17.4px/22px 'Liberation Sans', sans-serif;color:#404040;letter-spacing:0.5px;word-spacing:-1.5px">47,92</div>
<div class="a" style="right:1191.5px;top:962.18px;font:400 17.4px/22px 'Liberation Sans', sans-serif;color:#404040;letter-spacing:0.5px;word-spacing:-1.5px">9&nbsp;201,45</div>
<div class="a" style="right:1039.5px;top:962.18px;font:400 17.4px/22px 'Liberation Sans', sans-serif;color:#404040;letter-spacing:0.5px;word-spacing:-1.5px">483&nbsp;612,71</div>
<div class="a" style="right:881.5px;top:962.18px;font:400 17.4px/22px 'Liberation Sans', sans-serif;color:#404040;letter-spacing:0.5px;word-spacing:-1.5px">23&nbsp;176&nbsp;859,46</div>
<div class="a" style="left:19px;top:993.73px;font:400 17.7px/22px 'Liberation Sans', sans-serif;color:#404040">Менеджер 2</div>
<div class="a" style="right:1588.5px;top:993.73px;font:400 17.4px/22px 'Liberation Sans', sans-serif;color:#404040;letter-spacing:0.5px;word-spacing:-1.5px">17,77</div>
<div class="a" style="right:1364.5px;top:993.73px;font:400 17.4px/22px 'Liberation Sans', sans-serif;color:#404040;letter-spacing:0.5px;word-spacing:-1.5px">42,82</div>
<div class="a" style="right:1191.5px;top:993.73px;font:400 17.4px/22px 'Liberation Sans', sans-serif;color:#404040;letter-spacing:0.5px;word-spacing:-1.5px">4&nbsp;429,35</div>
<div class="a" style="right:1039.5px;top:993.73px;font:400 17.4px/22px 'Liberation Sans', sans-serif;color:#404040;letter-spacing:0.5px;word-spacing:-1.5px">246&nbsp;297,87</div>
<div class="a" style="right:881.5px;top:993.73px;font:400 17.4px/22px 'Liberation Sans', sans-serif;color:#404040;letter-spacing:0.5px;word-spacing:-1.5px">10&nbsp;547&nbsp;008,75</div>
<div class="a" style="left:19px;top:1025.28px;font:400 17.7px/22px 'Liberation Sans', sans-serif;color:#404040">Менеджер 14</div>
<div class="a" style="right:1588.5px;top:1025.28px;font:400 17.4px/22px 'Liberation Sans', sans-serif;color:#404040;letter-spacing:0.5px;word-spacing:-1.5px">21,80</div>
<div class="a" style="right:1364.5px;top:1025.28px;font:400 17.4px/22px 'Liberation Sans', sans-serif;color:#404040;letter-spacing:0.5px;word-spacing:-1.5px">34,91</div>
<div class="a" style="right:1191.5px;top:1025.28px;font:400 17.4px/22px 'Liberation Sans', sans-serif;color:#404040;letter-spacing:0.5px;word-spacing:-1.5px">504&nbsp;705,36</div>
<div class="a" style="right:1039.5px;top:1025.28px;font:400 17.4px/22px 'Liberation Sans', sans-serif;color:#404040;letter-spacing:0.5px;word-spacing:-1.5px">542&nbsp;344,05</div>
<div class="a" style="right:881.5px;top:1025.28px;font:400 17.4px/22px 'Liberation Sans', sans-serif;color:#404040;letter-spacing:0.5px;word-spacing:-1.5px">18&nbsp;935&nbsp;512,53</div>
<div class="a" style="left:19px;top:1056.83px;font:400 17.7px/22px 'Liberation Sans', sans-serif;color:#404040">Менеджер 17</div>
<div class="a" style="right:1588.5px;top:1056.83px;font:400 17.4px/22px 'Liberation Sans', sans-serif;color:#404040;letter-spacing:0.5px;word-spacing:-1.5px">29,77</div>
<div class="a" style="right:1364.5px;top:1056.83px;font:400 17.4px/22px 'Liberation Sans', sans-serif;color:#404040;letter-spacing:0.5px;word-spacing:-1.5px">25,57</div>
<div class="a" style="right:1191.5px;top:1056.83px;font:400 17.4px/22px 'Liberation Sans', sans-serif;color:#404040;letter-spacing:0.5px;word-spacing:-1.5px">764&nbsp;586,60</div>
<div class="a" style="right:1039.5px;top:1056.83px;font:400 17.4px/22px 'Liberation Sans', sans-serif;color:#404040;letter-spacing:0.5px;word-spacing:-1.5px">837&nbsp;585,47</div>
<div class="a" style="right:881.5px;top:1056.83px;font:400 17.4px/22px 'Liberation Sans', sans-serif;color:#404040;letter-spacing:0.5px;word-spacing:-1.5px">21&nbsp;413&nbsp;976,99</div>
<div class="a" style="left:12px;top:1040px;width:1100px;height:28px;background:linear-gradient(to bottom, rgba(0,0,0,0) 0%, rgba(0,0,0,0.02) 40%, rgba(0,0,0,0.045) 45%, rgba(0,0,0,0.02) 100%)"></div>
<div class="a" style="left:0;top:1068px;width:1115px;height:12px;background:#fff"></div>
<!--CHART-->
<svg style="left:0;top:0" width="1920" height="1080"><path d="M1239 370.5 H1741" stroke="#efefef" stroke-width="1"/><path d="M1239 489.5 H1741" stroke="#efefef" stroke-width="1"/><path d="M1239 606.5 H1741" stroke="#efefef" stroke-width="1"/><path d="M1239 724.5 H1741" stroke="#efefef" stroke-width="1"/><path d="M1239 959.5 H1741" stroke="#efefef" stroke-width="1"/><path d="M1249.5 370 V960" stroke="#efefef" stroke-width="1"/><path d="M1249.5 961 V971" stroke="#f2f2f2" stroke-width="1"/><path d="M1577.5 370 V960" stroke="#efefef" stroke-width="1"/><path d="M1577.5 961 V971" stroke="#f2f2f2" stroke-width="1"/><path d="M1741.5 370 V960" stroke="#efefef" stroke-width="1"/><path d="M1741.5 961 V971" stroke="#f2f2f2" stroke-width="1"/><path d="M1413.5 961 V971" stroke="#f2f2f2" stroke-width="1"/><path d="M1413.5 959 V370.5" stroke="#a0a0a0" stroke-width="1"/><path d="M1239 841.7 H1249" stroke="#f0f0f0" stroke-width="1"/><path d="M1250 841.7 H1741" stroke="#bbbbbb" stroke-width="1.4"/><circle cx="1414.5" cy="411.4" r="4.2" fill="#3d8fbf" stroke="#fff" stroke-width="0.7"/><circle cx="1665.3" cy="491.2" r="5.0" fill="#3a9dc3" stroke="#fff" stroke-width="0.7"/><circle cx="1414.5" cy="560.6" r="4.3" fill="#74c6e2" stroke="#fff" stroke-width="0.7"/><circle cx="1579.8" cy="585.0" r="5.0" fill="#2e6fa5" stroke="#fff" stroke-width="0.7"/><circle cx="1416.1" cy="632.7" r="4.7" fill="#2e6fa5" stroke="#fff" stroke-width="0.7"/><circle cx="1417.7" cy="655.0" r="4.7" fill="#3a9fc4" stroke="#fff" stroke-width="0.7"/><circle cx="1484.2" cy="660.2" r="4.7" fill="#2f76b0" stroke="#fff" stroke-width="0.7"/><circle cx="1498.5" cy="666.7" r="4.7" fill="#47afd3" stroke="#fff" stroke-width="0.7"/><circle cx="1559.3" cy="669.4" r="4.7" fill="#2f76b0" stroke="#fff" stroke-width="0.7"/><circle cx="1414.7" cy="684.7" r="4.7" fill="#40b0d5" stroke="#fff" stroke-width="0.7"/><circle cx="1414.7" cy="693.7" r="4.7" fill="#6cbad3" stroke="#fff" stroke-width="0.7"/><circle cx="1423.3" cy="707.3" r="5.3" fill="#6cbad3" stroke="#fff" stroke-width="0.7"/><circle cx="1414.8" cy="734.3" r="3.9" fill="#7ad3f0" stroke="#fff" stroke-width="0.7"/><circle cx="1414.8" cy="747.6" r="3.4" fill="#b3e6f7" stroke="#fff" stroke-width="0.7"/><circle cx="1514.2" cy="753.3" r="5.4" fill="#3b8fbd" stroke="#fff" stroke-width="0.7"/><circle cx="1436.2" cy="789.1" r="5.9" fill="#2a5a8a" stroke="#fff" stroke-width="0.7"/><circle cx="1420.0" cy="802.0" r="6.3" fill="#7ad3f0" stroke="#fff" stroke-width="0.7"/><circle cx="1415.5" cy="806.0" r="6.5" fill="#88d5ee" stroke="#fff" stroke-width="0.7"/><circle cx="1415.0" cy="810.0" r="7.0" fill="#9fdff5" stroke="#fff" stroke-width="0.7"/><circle cx="1417.0" cy="813.0" r="7.0" fill="#a8e4f7" stroke="#fff" stroke-width="0.7"/><circle cx="1414.8" cy="825.0" r="5.2" fill="#8ad8f2" stroke="#fff" stroke-width="0.7"/><circle cx="1414.8" cy="841.3" r="12.7" fill="#cdebf4" stroke="#fff" stroke-width="0.7"/><path d="M1414.5 400 V404" stroke="#595959" stroke-width="1.2"/><path d="M1665.3 479 V484" stroke="#595959" stroke-width="1.2"/><path d="M1414.5 549 V553" stroke="#595959" stroke-width="1.2"/><path d="M1579.8 573 V578" stroke="#595959" stroke-width="1.2"/><path d="M1416.1 620 V626" stroke="#595959" stroke-width="1.2"/><path d="M1559.3 657 V662" stroke="#595959" stroke-width="1.2"/><path d="M1498.5 673 V679" stroke="#595959" stroke-width="1.2"/><path d="M1514.2 740 V746" stroke="#595959" stroke-width="1.2"/><path d="M1436.2 776 V782" stroke="#595959" stroke-width="1.2"/><path d="M1414.8 854 V860" stroke="#595959" stroke-width="1.2"/></svg>
<div class="a" style="right:686px;top:362.5px;font:400 14.5px/16px 'Liberation Sans', sans-serif;color:#595959;letter-spacing:0.4px">40,00</div>
<div class="a" style="right:686px;top:481.5px;font:400 14.5px/16px 'Liberation Sans', sans-serif;color:#595959;letter-spacing:0.4px">30,00</div>
<div class="a" style="right:686px;top:598.5px;font:400 14.5px/16px 'Liberation Sans', sans-serif;color:#595959;letter-spacing:0.4px">20,00</div>
<div class="a" style="right:686px;top:716.5px;font:400 14.5px/16px 'Liberation Sans', sans-serif;color:#595959;letter-spacing:0.4px">10,00</div>
<div class="a" style="right:686px;top:833.7px;font:400 14.5px/16px 'Liberation Sans', sans-serif;color:#595959;letter-spacing:0.4px">0,00</div>
<div class="a" style="right:686px;top:951.5px;font:400 14.5px/16px 'Liberation Sans', sans-serif;color:#595959;letter-spacing:0.4px">-10,00</div>
<div class="a" style="left:1189.5px;top:982px;width:120px;text-align:center;font:400 14.5px/16px 'Liberation Sans', sans-serif;color:#595959;letter-spacing:0.9px;word-spacing:-1.5px">-500&nbsp;000</div>
<div class="a" style="left:1353.5px;top:982px;width:120px;text-align:center;font:400 14.5px/16px 'Liberation Sans', sans-serif;color:#595959;letter-spacing:0.9px;word-spacing:-1.5px">0</div>
<div class="a" style="left:1517.5px;top:982px;width:120px;text-align:center;font:400 14.5px/16px 'Liberation Sans', sans-serif;color:#595959;letter-spacing:0.9px;word-spacing:-1.5px">500&nbsp;000</div>
<div class="a" style="left:1681.5px;top:982px;width:120px;text-align:center;font:400 14.5px/16px 'Liberation Sans', sans-serif;color:#595959;letter-spacing:0.9px;word-spacing:-1.5px">1&nbsp;000&nbsp;000</div>
<div class="a" style="left:1314.5px;top:382.0px;width:200px;text-align:center;font:400 16px/18px 'Liberation Sans', sans-serif;color:#595959;letter-spacing:0.7px">Менеджер 16</div>
<div class="a" style="left:1565.3px;top:461.0px;width:200px;text-align:center;font:400 16px/18px 'Liberation Sans', sans-serif;color:#595959;letter-spacing:0.7px">Менеджер 17</div>
<div class="a" style="left:1314.5px;top:531.0px;width:200px;text-align:center;font:400 16px/18px 'Liberation Sans', sans-serif;color:#595959;letter-spacing:0.7px">Менеджер 20</div>
<div class="a" style="left:1479.8px;top:555.0px;width:200px;text-align:center;font:400 16px/18px 'Liberation Sans', sans-serif;color:#595959;letter-spacing:0.7px">Менеджер 14</div>
<div class="a" style="left:1316.1px;top:603.0px;width:200px;text-align:center;font:400 16px/18px 'Liberation Sans', sans-serif;color:#595959;letter-spacing:0.7px">Менеджер 2</div>
<div class="a" style="left:1459.3px;top:640.0px;width:200px;text-align:center;font:400 16px/18px 'Liberation Sans', sans-serif;color:#595959;letter-spacing:0.7px">Менеджер 15</div>
<div class="a" style="left:1398.5px;top:680.0px;width:200px;text-align:center;font:400 16px/18px 'Liberation Sans', sans-serif;color:#595959;letter-spacing:0.7px">Менеджер 6</div>
<div class="a" style="left:1414.2px;top:723.0px;width:200px;text-align:center;font:400 16px/18px 'Liberation Sans', sans-serif;color:#595959;letter-spacing:0.7px">Менеджер 4</div>
<div class="a" style="left:1336.2px;top:758.0px;width:200px;text-align:center;font:400 16px/18px 'Liberation Sans', sans-serif;color:#595959;letter-spacing:0.7px">Менеджер 1</div>
<div class="a" style="left:1314.8px;top:863.0px;width:200px;text-align:center;font:400 16px/18px 'Liberation Sans', sans-serif;color:#595959;letter-spacing:0.7px">Менеджер 24</div>
<div class="a" style="left:1143.5px;top:683px;transform:translate(-50%,-50%) rotate(-90deg);font:400 17px/18px 'Liberation Sans', sans-serif;color:#404040">Оборачиваемость КЗ, дней</div>
<svg style="left:1140px;top:552px" width="10" height="11"><path d="M0.5 0.5 L8.5 5.5 L0.5 10.5Z" fill="#808080"/></svg>
<div class="a" style="left:1358px;top:1010px;font:400 17.5px/20px 'Liberation Sans', sans-serif;color:#404040">Кредиторская задолженность</div>
<svg style="left:1612px;top:1017px" width="12" height="8"><path d="M0 0 H11.5 L5.75 7.5Z" fill="#808080"/></svg>
<div class="a" style="left:1126px;top:1045px;font:italic 400 17.2px/20px 'Liberation Sans', sans-serif;color:#808080">Размер шарика - коэффициент оборачиваемости</div>
<div class="a" style="left:1765px;top:380px;font:400 18px/20px 'Liberation Sans', sans-serif;color:#595959">Менеджер</div>
<div class="a" style="left:1788px;top:416.1px;font:400 17.2px/20px 'Liberation Sans', sans-serif;color:#404040;letter-spacing:0.2px">Менеджер 16</div>
<div class="a" style="left:1788px;top:443.6px;font:400 17.2px/20px 'Liberation Sans', sans-serif;color:#404040;letter-spacing:0.2px">Менеджер 17</div>
<div class="a" style="left:1788px;top:471.1px;font:400 17.2px/20px 'Liberation Sans', sans-serif;color:#404040;letter-spacing:0.2px">Менеджер 20</div>
<div class="a" style="left:1788px;top:498.6px;font:400 17.2px/20px 'Liberation Sans', sans-serif;color:#404040;letter-spacing:0.2px">Менеджер 14</div>
<div class="a" style="left:1788px;top:526.1px;font:400 17.2px/20px 'Liberation Sans', sans-serif;color:#404040;letter-spacing:0.2px">Менеджер 2</div>
<div class="a" style="left:1788px;top:553.6px;font:400 17.2px/20px 'Liberation Sans', sans-serif;color:#404040;letter-spacing:0.2px">Менеджер 5</div>
<div class="a" style="left:1788px;top:581.1px;font:400 17.2px/20px 'Liberation Sans', sans-serif;color:#404040;letter-spacing:0.2px">Менеджер 3</div>
<div class="a" style="left:1788px;top:608.6px;font:400 17.2px/20px 'Liberation Sans', sans-serif;color:#404040;letter-spacing:0.2px">Менеджер 6</div>
<div class="a" style="left:1788px;top:636.1px;font:400 17.2px/20px 'Liberation Sans', sans-serif;color:#404040;letter-spacing:0.2px">Менеджер 15</div>
<div class="a" style="left:1788px;top:663.6px;font:400 17.2px/20px 'Liberation Sans', sans-serif;color:#404040;letter-spacing:0.2px">Менеджер 18</div>
<div class="a" style="left:1788px;top:691.1px;font:400 17.2px/20px 'Liberation Sans', sans-serif;color:#404040;letter-spacing:0.2px">Менеджер 19</div>
<div class="a" style="left:1788px;top:718.6px;font:400 17.2px/20px 'Liberation Sans', sans-serif;color:#404040;letter-spacing:0.2px">Менеджер 7</div>
<div class="a" style="left:1788px;top:746.1px;font:400 17.2px/20px 'Liberation Sans', sans-serif;color:#404040;letter-spacing:0.2px">Менеджер 21</div>
<div class="a" style="left:1788px;top:773.6px;font:400 17.2px/20px 'Liberation Sans', sans-serif;color:#404040;letter-spacing:0.2px">Менеджер 23</div>
<div class="a" style="left:1788px;top:801.1px;font:400 17.2px/20px 'Liberation Sans', sans-serif;color:#404040;letter-spacing:0.2px">Менеджер 4</div>
<div class="a" style="left:1788px;top:828.6px;font:400 17.2px/20px 'Liberation Sans', sans-serif;color:#404040;letter-spacing:0.2px">Менеджер 1</div>
<div class="a" style="left:1788px;top:856.1px;font:400 17.2px/20px 'Liberation Sans', sans-serif;color:#404040;letter-spacing:0.2px">Менеджер 9</div>
<div class="a" style="left:1788px;top:883.6px;font:400 17.2px/20px 'Liberation Sans', sans-serif;color:#404040;letter-spacing:0.2px">Менеджер 13</div>
<svg style="left:0;top:0" width="1920" height="1080"><circle cx="1770.1" cy="425.1" r="6" fill="#3d8fbf"/><circle cx="1770.1" cy="452.6" r="6" fill="#3a9dc3"/><circle cx="1770.1" cy="480.1" r="6" fill="#74c6e2"/><circle cx="1770.1" cy="507.6" r="6" fill="#2e6fa5"/><circle cx="1770.1" cy="535.1" r="6" fill="#2e6fa5"/><circle cx="1770.1" cy="562.6" r="6" fill="#3a9fc4"/><circle cx="1770.1" cy="590.1" r="6" fill="#2f76b0"/><circle cx="1770.1" cy="617.6" r="6" fill="#47afd3"/><circle cx="1770.1" cy="645.1" r="6" fill="#2f76b0"/><circle cx="1770.1" cy="672.6" r="6" fill="#40b0d5"/><circle cx="1770.1" cy="700.1" r="6" fill="#6cbad3"/><circle cx="1770.1" cy="727.6" r="6" fill="#6cbad3"/><circle cx="1770.1" cy="755.1" r="6" fill="#7ad3f0"/><circle cx="1770.1" cy="782.6" r="6" fill="#b3e6f7"/><circle cx="1770.1" cy="810.1" r="6" fill="#3b8fbd"/><circle cx="1770.1" cy="837.6" r="6" fill="#2a5a8a"/><circle cx="1770.1" cy="865.1" r="6" fill="#7ad3f0"/><circle cx="1770.1" cy="892.6" r="6" fill="#2a5a8a"/><path d="M1805 925 H1817 L1811 934Z" fill="#404040"/><path d="M1845 934 H1857 L1851 925Z" fill="#b0b0b0"/></svg>
<div class="a" style="left:1745px;top:901px;width:175px;height:15px;background:#fff"></div>
</body></html>
